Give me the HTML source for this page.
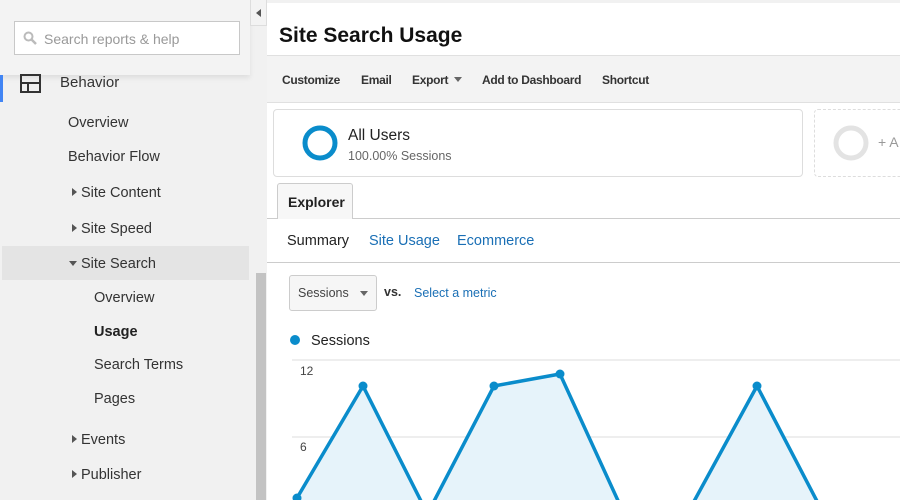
<!DOCTYPE html>
<html><head><style>
*{margin:0;padding:0;box-sizing:border-box}
body{width:900px;height:500px;overflow:hidden;background:#fff;font-family:"Liberation Sans",Arial,sans-serif;position:relative;color:#222}
.a{position:absolute;white-space:nowrap}
#side{position:absolute;left:0;top:0;width:267px;height:500px;background:#f1f1f1}
.nav{font-size:14.5px;color:#333}
.tri{display:inline-block;width:0;height:0;border-top:4px solid transparent;border-bottom:4px solid transparent;border-left:5px solid #555;margin-right:4px;vertical-align:1px}
.trid{display:inline-block;width:0;height:0;border-left:4px solid transparent;border-right:4px solid transparent;border-top:5px solid #555;margin-right:4px;vertical-align:2px}
.tb{font-size:12px;letter-spacing:-0.3px;font-weight:bold;color:#333;top:73px}
.link{color:#1a6fb5}
</style></head><body>
<div id="side">
  <div class="a" style="left:0;top:0;width:250px;height:75px;background:#f3f3f3;box-shadow:0 3px 5px rgba(0,0,0,0.08)"></div>
  <div class="a" style="left:14px;top:21px;width:226px;height:34px;background:#fff;border:1px solid #c8c8c8"></div>
  <svg class="a" style="left:23px;top:31px" width="14" height="14"><circle cx="5.5" cy="5.5" r="4" fill="none" stroke="#bbb" stroke-width="2"/><line x1="8.5" y1="8.5" x2="13" y2="13" stroke="#bbb" stroke-width="2.5"/></svg>
  <div class="a" style="left:44px;top:31px;font-size:14px;color:#999">Search reports &amp; help</div>
  <div class="a" style="left:0;top:75px;width:3px;height:27px;background:#4285f4"></div>
  <svg class="a" style="left:20px;top:74px" width="21" height="19"><rect x="1" y="1" width="19" height="17" fill="none" stroke="#333" stroke-width="2"/><line x1="1" y1="9" x2="20" y2="9" stroke="#333" stroke-width="2"/><line x1="8" y1="9" x2="8" y2="18" stroke="#333" stroke-width="2"/></svg>
  <div class="a nav" style="left:60px;top:74px;font-size:15px">Behavior</div>
  <div class="a nav" style="left:68px;top:115px">Overview</div>
  <div class="a nav" style="left:68px;top:149px">Behavior Flow</div>
  <div class="a nav" style="left:72px;top:185px"><span class="tri"></span>Site Content</div>
  <div class="a nav" style="left:72px;top:221px"><span class="tri"></span>Site Speed</div>
  <div class="a" style="left:2px;top:246px;width:247px;height:34px;background:#e4e4e4"></div>
  <div class="a nav" style="left:69px;top:256px"><span class="trid"></span>Site Search</div>
  <div class="a nav" style="left:94px;top:290px">Overview</div>
  <div class="a nav" style="left:94px;top:324px;font-weight:bold;color:#222">Usage</div>
  <div class="a nav" style="left:94px;top:357px">Search Terms</div>
  <div class="a nav" style="left:94px;top:391px">Pages</div>
  <div class="a nav" style="left:72px;top:432px"><span class="tri"></span>Events</div>
  <div class="a nav" style="left:72px;top:467px"><span class="tri"></span>Publisher</div>
  <div class="a" style="left:256px;top:273px;width:10px;height:227px;background:#c3c3c3"></div>
  <div class="a" style="left:250px;top:0;width:17px;height:26px;background:#f3f3f3;border:1px solid #ddd;border-top:none"></div>
  <div class="a" style="left:256px;top:9px;width:0;height:0;border-top:4px solid transparent;border-bottom:4px solid transparent;border-right:5px solid #555"></div>
</div>
<div class="a" style="left:267px;top:0;width:633px;height:3px;background:#f1f1f1"></div>
<div class="a" style="left:279px;top:24px;font-size:21px;font-weight:bold;color:#111">Site Search Usage</div>
<div class="a" style="left:267px;top:55px;width:633px;height:48px;background:#f3f3f3;border-top:1px solid #e0e0e0;border-bottom:1px solid #e0e0e0"></div>
<div class="a tb" style="left:282px">Customize</div>
<div class="a tb" style="left:361px">Email</div>
<div class="a tb" style="left:412px">Export <span style="display:inline-block;border-left:4px solid transparent;border-right:4px solid transparent;border-top:5px solid #666;vertical-align:2px;margin-left:3px"></span></div>
<div class="a tb" style="left:482px">Add to Dashboard</div>
<div class="a tb" style="left:602px">Shortcut</div>
<div class="a" style="left:273px;top:109px;width:530px;height:68px;border:1px solid #ddd;border-radius:4px"></div>
<svg class="a" style="left:301px;top:124px" width="38" height="38"><circle cx="19" cy="19" r="15" fill="none" stroke="#0a8ccb" stroke-width="5"/></svg>
<div class="a" style="left:348px;top:127px;font-size:15.5px;color:#222">All Users</div>
<div class="a" style="left:348px;top:149px;font-size:12.5px;color:#666">100.00% Sessions</div>
<div class="a" style="left:814px;top:109px;width:100px;height:68px;border:1px dashed #ddd;border-radius:4px"></div>
<svg class="a" style="left:832px;top:124px" width="38" height="38"><circle cx="19" cy="19" r="15" fill="none" stroke="#e3e3e3" stroke-width="5"/></svg>
<div class="a" style="left:878px;top:134px;font-size:14px;color:#999">+ A</div>
<div class="a" style="left:267px;top:218px;width:633px;height:1px;background:#ccc"></div>
<div class="a" style="left:277px;top:183px;width:76px;height:36px;background:#f7f7f7;border:1px solid #ccc;border-bottom:none;border-radius:3px 3px 0 0"></div>
<div class="a" style="left:288px;top:194px;font-size:14px;font-weight:bold;color:#222">Explorer</div>
<div class="a" style="left:287px;top:233px;font-size:14.5px;color:#222">Summary</div>
<div class="a link" style="left:369px;top:233px;font-size:14.5px">Site Usage</div>
<div class="a link" style="left:457px;top:233px;font-size:14.5px">Ecommerce</div>
<div class="a" style="left:267px;top:262px;width:633px;height:1px;background:#ccc"></div>
<div class="a" style="left:289px;top:275px;width:88px;height:36px;background:#f6f6f6;border:1px solid #ccc;border-radius:3px"></div>
<div class="a" style="left:298px;top:286px;font-size:12.5px;color:#444">Sessions</div>
<div class="a" style="left:360px;top:291px;border-left:4px solid transparent;border-right:4px solid transparent;border-top:5px solid #666"></div>
<div class="a" style="left:384px;top:285px;font-size:12.5px;font-weight:bold;color:#333">vs.</div>
<div class="a link" style="left:414px;top:286px;font-size:12.5px">Select a metric</div>
<div class="a" style="left:290px;top:335px;width:10px;height:10px;border-radius:50%;background:#0a8ccb"></div>
<div class="a" style="left:311px;top:333px;font-size:14.5px;color:#222">Sessions</div>
<svg class="a" style="left:267px;top:355px" width="633" height="145">
<line x1="25" y1="5" x2="633" y2="5" stroke="#eee" stroke-width="2"/>
<line x1="25" y1="82" x2="633" y2="82" stroke="#eee" stroke-width="2"/>
<text x="33" y="20" font-size="12" fill="#444" font-family="Liberation Sans">12</text>
<text x="33" y="96" font-size="12" fill="#444" font-family="Liberation Sans">6</text>
<polygon points="30,145 96,31 156,150 165,150 227,31 293,19 353,150 425,150 490,31 552,150" fill="#e6f3fa"/>
<polyline points="30,143 96,31 156,150" fill="none" stroke="#0a8ccb" stroke-width="3.5"/>
<polyline points="165,150 227,31 293,19 353,150" fill="none" stroke="#0a8ccb" stroke-width="3.5"/>
<polyline points="425,150 490,31 552,150" fill="none" stroke="#0a8ccb" stroke-width="3.5"/>
<g fill="#0a8ccb"><circle cx="30" cy="143" r="4.5"/><circle cx="96" cy="31" r="4.5"/><circle cx="227" cy="31" r="4.5"/><circle cx="293" cy="19" r="4.5"/><circle cx="490" cy="31" r="4.5"/></g>
</svg>
</body></html>
